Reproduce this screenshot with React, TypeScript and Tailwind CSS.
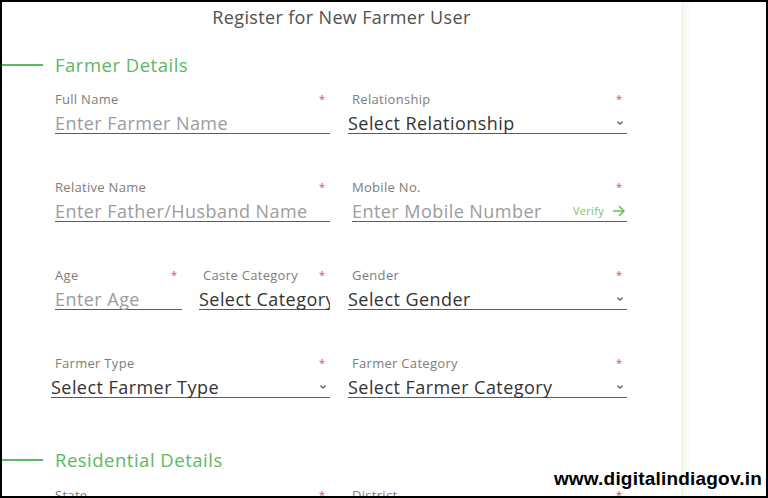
import React from "react";

const GREEN = "text-[#5cb85f]";

function Label({ text, className = "" }: { text: string; className?: string }) {
  return (
    <div className={"flex justify-between items-start h-[16px] " + className}>
      <span className="text-[13px] leading-[16px] tracking-[0.3px] text-[#7d7d7d] whitespace-nowrap">{text}</span>
      <span className="text-[#e0474c] text-[11px] leading-[12px] mt-[2px] mr-[5px]">*</span>
    </div>
  );
}

function Chevron() {
  return (
    <svg width="8" height="6" viewBox="0 0 8 6" className="shrink-0 mb-[7px]">
      <path d="M1.8 2 L4 4 L6.2 2" fill="none" stroke="#555" strokeWidth="1.2" strokeLinecap="round" strokeLinejoin="round" />
    </svg>
  );
}

function TextField({ label, placeholder, verify }: { label: string; placeholder: string; verify?: boolean }) {
  return (
    <div className="flex flex-col">
      <Label text={label} />
      <div className="mt-[2px] h-[25px] border-b-[1.5px] border-[#5c5c5c] flex items-end justify-between overflow-x-clip overflow-y-visible">
        <span className="text-[18px] leading-[20px] tracking-[0.45px] text-[#9c9c9c] whitespace-nowrap">{placeholder}</span>
        {verify && (
          <span className="flex items-center mb-[3px]">
            <span className="text-[11px] leading-[14px] tracking-[0.3px] text-[#7cc35c]">Verify</span>
            <svg width="14" height="12" viewBox="0 0 14 12" className="ml-[8px] mr-[1px]">
              <path d="M1.5 6 H12 M7.5 1.5 L12 6 L7.5 10.5" fill="none" stroke="#6cbf4f" strokeWidth="1.6" strokeLinecap="round" strokeLinejoin="round" />
            </svg>
          </span>
        )}
      </div>
    </div>
  );
}

function SelectField({ label, value, chevron = true }: { label: string; value: string; chevron?: boolean }) {
  return (
    <div className="flex flex-col">
      <Label text={label} />
      <div className="-ml-[4px] mt-[2px] h-[25px] border-b-[1.5px] border-[#5c5c5c] flex items-end justify-between overflow-x-clip overflow-y-visible">
        <span className="text-[18px] leading-[20px] tracking-[0.45px] text-[#333333] whitespace-nowrap">{value}</span>
        {chevron && <span className="mr-[3px]"><Chevron /></span>}
      </div>
    </div>
  );
}

function SectionHeader({ text }: { text: string }) {
  return (
    <div className="flex items-center h-[24px]">
      <div className="w-[41px] h-[1.5px] bg-[#5cb85f]" />
      <span className={"ml-[12px] text-[18.5px] leading-[24px] tracking-[0.5px] " + GREEN}>{text}</span>
    </div>
  );
}

export default function App() {
  return (
    <div className="w-[768px] h-[498px] border-2 border-black bg-white relative overflow-hidden flex font-['Open_Sans',sans-serif]">
      <div className="w-[679px] flex flex-col shrink-0">
        <div className="pt-[4px] text-center text-[18px] leading-[22px] tracking-[0.35px] text-[#505050]">Register for New Farmer User</div>
        <div className="mt-[25px]">
          <SectionHeader text="Farmer Details" />
        </div>
        <div className="mt-[14px] pl-[53px] grid grid-cols-[275px_275px] gap-x-[22px] gap-y-[45px]">
          <TextField label="Full Name" placeholder="Enter Farmer Name" />
          <SelectField label="Relationship" value="Select Relationship" />
          <TextField label="Relative Name" placeholder="Enter Father/Husband Name" />
          <TextField label="Mobile No." placeholder="Enter Mobile Number" verify />
          <div className="grid grid-cols-[127px_127px] gap-x-[21px]">
            <TextField label="Age" placeholder="Enter Age" />
            <SelectField label="Caste Category" value="Select Category" chevron={false} />
          </div>
          <SelectField label="Gender" value="Select Gender" />
          <SelectField label="Farmer Type" value="Select Farmer Type" />
          <SelectField label="Farmer Category" value="Select Farmer Category" />
        </div>
        <div className="mt-[50px]">
          <SectionHeader text="Residential Details" />
        </div>
        <div className="mt-[15px] pl-[53px] grid grid-cols-[275px_275px] gap-x-[22px]">
          <Label text="State" />
          <Label text="District" />
        </div>
      </div>
      <div className="w-[10px] shrink-0 bg-gradient-to-r from-[#edf6ea] to-white" />
      <div className="flex-1" />
      <div className="absolute right-[4px] bottom-[6px] text-[19px] leading-[22px] font-bold tracking-[0.2px] text-black font-['Liberation_Sans',sans-serif]">
        www.digitalindiagov.in
      </div>
    </div>
  );
}
